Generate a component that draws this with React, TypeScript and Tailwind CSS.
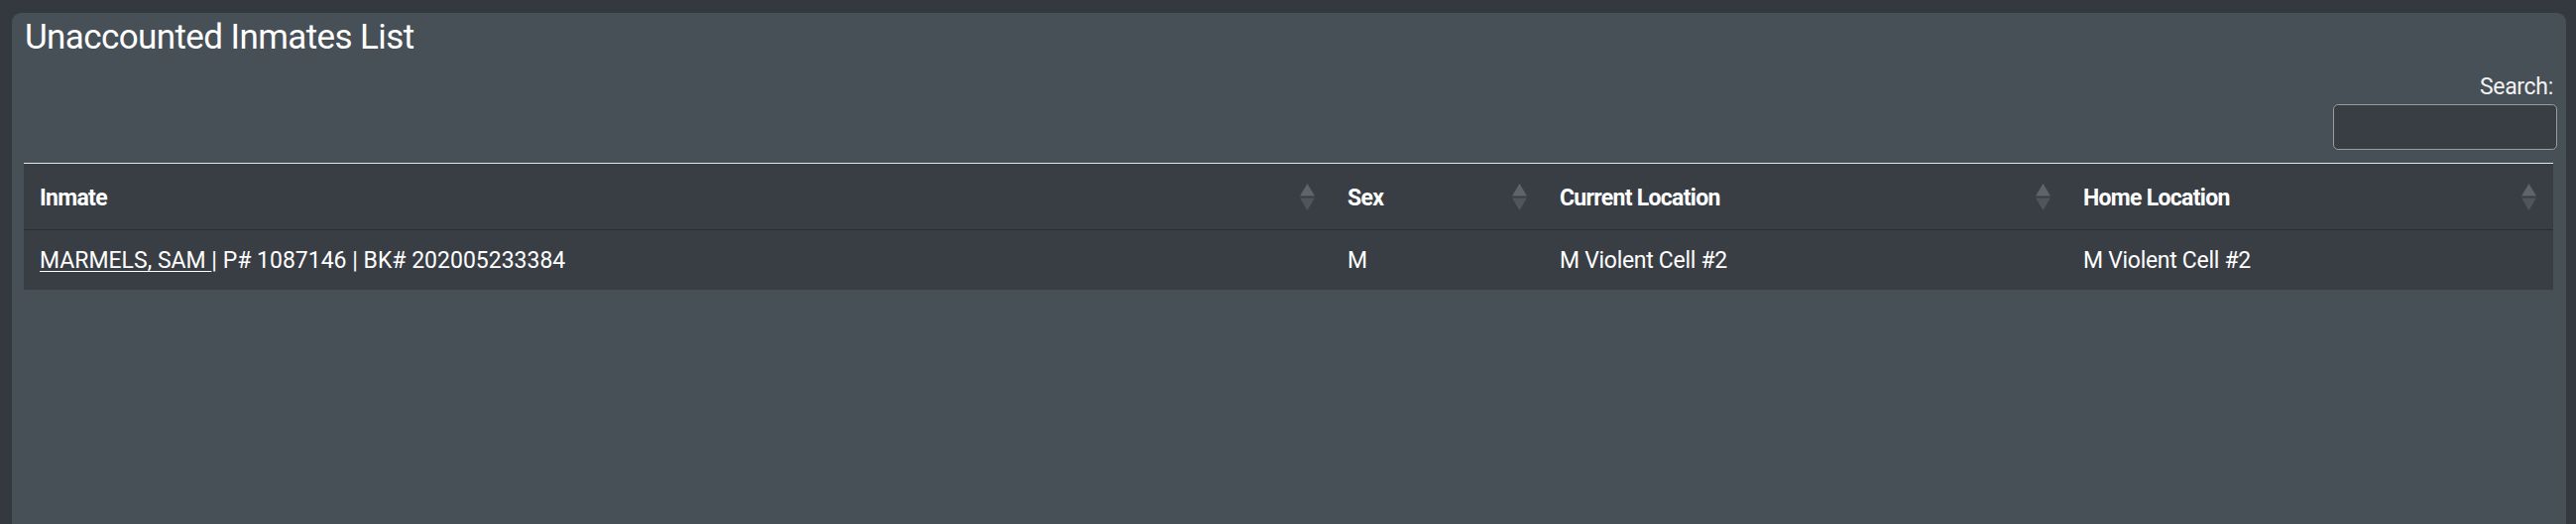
import React from "react";

const font = { fontFamily: 'Roboto, "Liberation Sans", sans-serif' };

function SortIcon() {
  return (
    <svg width="15" height="27" viewBox="0 0 15 27" className="block">
      <polygon points="7.5,0 15,12.5 0,12.5" fill="#5e646b" />
      <polygon points="0,14.5 15,14.5 7.5,27" fill="#50555c" />
    </svg>
  );
}

const headers = ["Inmate", "Sex", "Current Location", "Home Location"];

export default function App() {
  return (
    <div className="w-full h-[528px] bg-[#343940] pt-[13px] pl-[12px] pr-[10px] overflow-hidden" style={font}>
      <div className="h-full bg-[#474f57] rounded-t-[9px] pt-[4px] pl-[12px] pr-[13px] flex flex-col text-white">
        <h1 className="text-[35px] leading-[42px] font-normal tracking-[-0.6px] pl-[1px]">Unaccounted Inmates List</h1>
        <div className="flex flex-col items-end mt-[15px]">
          <label className="text-[23px] leading-[28px] tracking-[-0.3px] text-[#f2f2f2]">Search:</label>
          <input
            type="text"
            className="mt-[3px] mr-[-4px] w-[226px] h-[46px] rounded-[5px] border border-[#9a9c9f] bg-[#393d44] outline-none"
          />
        </div>
        <div className="mt-[13px] bg-[#393d44] border-t border-[#e4e6e8]">
          <div className="grid grid-cols-[1319px_214px_528px_490px] border-b border-[#2a2d32]">
            {headers.map((h) => (
              <div key={h} className="h-[66px] pl-[16px] pr-[17px] flex items-start justify-between">
                <span className="mt-[21px] text-[23px] leading-[28px] font-bold tracking-[-0.7px]">{h}</span>
                <div className="mt-[20px]">
                  <SortIcon />
                </div>
              </div>
            ))}
          </div>
          <div className="grid grid-cols-[1319px_214px_528px_490px] text-[23px] leading-[28px]">
            <div className="h-[60px] pl-[16px] pt-[17px] whitespace-nowrap">
              <a href="#" className="underline underline-offset-[3px] decoration-1">MARMELS, SAM </a>
              | P# 1087146 | BK# 202005233384
            </div>
            <div className="h-[60px] pl-[16px] pt-[17px]">M</div>
            <div className="h-[60px] pl-[16px] pt-[17px] tracking-[-0.3px]">M Violent Cell #2</div>
            <div className="h-[60px] pl-[16px] pt-[17px] tracking-[-0.3px]">M Violent Cell #2</div>
          </div>
        </div>
      </div>
    </div>
  );
}
